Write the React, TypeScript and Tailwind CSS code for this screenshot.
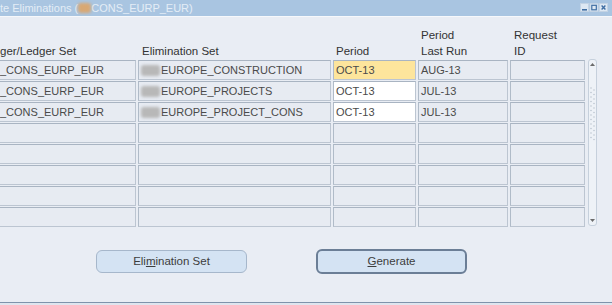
import React from 'react';

const FONT = { fontFamily: '"Liberation Sans", Arial, sans-serif' };

type Row = { ledger: string; set: string; period: string; last: string; hl?: 'yellow' | 'white' };

const rows: Row[] = [
  { ledger: '_CONS_EURP_EUR', set: 'EUROPE_CONSTRUCTION', period: 'OCT-13', last: 'AUG-13', hl: 'yellow' },
  { ledger: '_CONS_EURP_EUR', set: 'EUROPE_PROJECTS', period: 'OCT-13', last: 'JUL-13', hl: 'white' },
  { ledger: '_CONS_EURP_EUR', set: 'EUROPE_PROJECT_CONS', period: 'OCT-13', last: 'JUL-13', hl: 'white' },
  { ledger: '', set: '', period: '', last: '' },
  { ledger: '', set: '', period: '', last: '' },
  { ledger: '', set: '', period: '', last: '' },
  { ledger: '', set: '', period: '', last: '' },
  { ledger: '', set: '', period: '', last: '' },
];

function Cell({ children, bg = 'bg-[#e7ebf2]', pad = 'pl-[2px]' }: { children?: React.ReactNode; bg?: string; pad?: string }) {
  return (
    <div
      className={`h-5 flex items-center overflow-hidden whitespace-nowrap border border-[#bcc5d1] border-t-[#a9b4c2] border-l-[#b0bbc8] text-[11px] text-[#4a4a4a] ${bg} ${pad}`}
    >
      {children}
    </div>
  );
}

function Blob() {
  return <span className="inline-block w-[19px] h-[11px] mr-[1px] rounded-[3px] bg-[#b8b8b8] blur-[1.5px]" />;
}

function WindowButtons() {
  return (
    <svg width="28" height="10" viewBox="0 0 28 10">
      <rect x="0.5" y="0.5" width="8" height="8" fill="#dde8f3" stroke="#c3d3e4" />
      <rect x="2" y="6" width="5" height="1.6" fill="#3f6ea3" />
      <rect x="10" y="0.5" width="8" height="8" fill="#dde8f3" stroke="#c3d3e4" />
      <rect x="11.8" y="2.3" width="4.5" height="4.5" fill="none" stroke="#3f6ea3" strokeWidth="1.2" />
      <rect x="19.5" y="0.5" width="8" height="8" fill="#dde8f3" stroke="#c3d3e4" />
      <path d="M21.6 2.6 L25.4 6.4 M25.4 2.6 L21.6 6.4" stroke="#3f6ea3" strokeWidth="1.4" />
    </svg>
  );
}

function ScrollBar() {
  return (
    <div className="ml-[3px] w-[9px] h-[167px] rounded-[3px] border border-[#c6d0dc] bg-[#eef2f7] flex flex-col items-center justify-between py-[2px]">
      <svg width="7" height="5" viewBox="0 0 7 5">
        <path d="M1 4 L3.5 1 L6 4 Z" fill="#6b6b6b" />
      </svg>
      <svg width="7" height="56" viewBox="0 0 7 56" className="-mt-[60px]">
        {Array.from({ length: 12 }).map((_, i) => (
          <g key={i}>
            <circle cx="2" cy={3 + i * 4.5} r="0.7" fill="#b3bcc8" />
            <circle cx="5" cy={5 + i * 4.5} r="0.7" fill="#b3bcc8" />
          </g>
        ))}
      </svg>
      <svg width="7" height="5" viewBox="0 0 7 5">
        <path d="M1 1 L6 1 L3.5 4 Z" fill="#6b6b6b" />
      </svg>
    </div>
  );
}

export default function App() {
  return (
    <div className="w-[612px] h-[305px] overflow-hidden bg-[#e9edf4] flex flex-col" style={FONT}>
      {/* Title bar */}
      <div className="h-4 bg-[#a9c5e1] flex items-center justify-between overflow-hidden">
        <div className="flex items-center text-[11px] text-[#e4edf6] whitespace-nowrap">
          <span>te Eliminations (</span>
          <span className="inline-block w-[13px] h-[10px] rounded-[3px] bg-[#d8a874] blur-[1.5px]" />
          <span>CONS_EURP_EUR)</span>
        </div>
        <div className="mr-[4px] flex items-center">
          <WindowButtons />
        </div>
      </div>
      <div className="h-[1px] bg-[#f6f8fb]" />

      {/* Table */}
      <div className="flex ml-[-10px]">
        <div className="grid grid-cols-[146px_193px_83px_90px_75px] gap-x-[2px] gap-y-[1px]">
          <div className="h-[42px] flex items-end text-[11.5px] leading-4 text-[#333] whitespace-nowrap pl-[10px]">
            ger/Ledger Set
          </div>
          <div className="h-[42px] flex items-end text-[11.5px] leading-4 text-[#333] pl-[4px]">Elimination Set</div>
          <div className="h-[42px] flex items-end text-[11.5px] leading-4 text-[#333] pl-[3px]">Period</div>
          <div className="h-[42px] flex items-end text-[11.5px] leading-4 text-[#333] pl-[3px]">
            <div>
              Period
              <br />
              Last Run
            </div>
          </div>
          <div className="h-[42px] flex items-end text-[11.5px] leading-4 text-[#333] pl-[4px]">
            <div>
              Request
              <br />
              ID
            </div>
          </div>

          {rows.map((r, i) => (
            <React.Fragment key={i}>
              <Cell pad="pl-[9px]">{r.ledger}</Cell>
              <Cell pad="pl-[2px]">
                {r.set && (
                  <>
                    <Blob />
                    {r.set}
                  </>
                )}
              </Cell>
              <Cell bg={r.hl === 'yellow' ? 'bg-[#fde59c]' : r.hl === 'white' ? 'bg-white' : 'bg-[#e7ebf2]'}>
                {r.period}
              </Cell>
              <Cell>{r.last}</Cell>
              <Cell />
            </React.Fragment>
          ))}
        </div>
        <div className="mt-[42px]">
          <ScrollBar />
        </div>
      </div>

      {/* Buttons */}
      <div className="mt-[22px] h-[25px] flex items-center pl-[96px] gap-[69px]">
        <button className="w-[151px] h-[23px] rounded-[6px] border border-[#a6b7cb] bg-[#d4e3f3] text-[11.5px] text-[#3d3d3d]">
          Eli<span className="underline">m</span>ination Set
        </button>
        <button className="w-[151px] h-[25px] rounded-[6px] border-2 border-[#6b7e96] bg-[#d4e3f3] text-[11.5px] text-[#3d3d3d]">
          <span className="underline">G</span>enerate
        </button>
      </div>

      <div className="flex-1" />
      <div className="h-[1px] bg-[#7f93ab]" />
      <div className="h-[2px] bg-[#dfe5ee]" />
    </div>
  );
}
